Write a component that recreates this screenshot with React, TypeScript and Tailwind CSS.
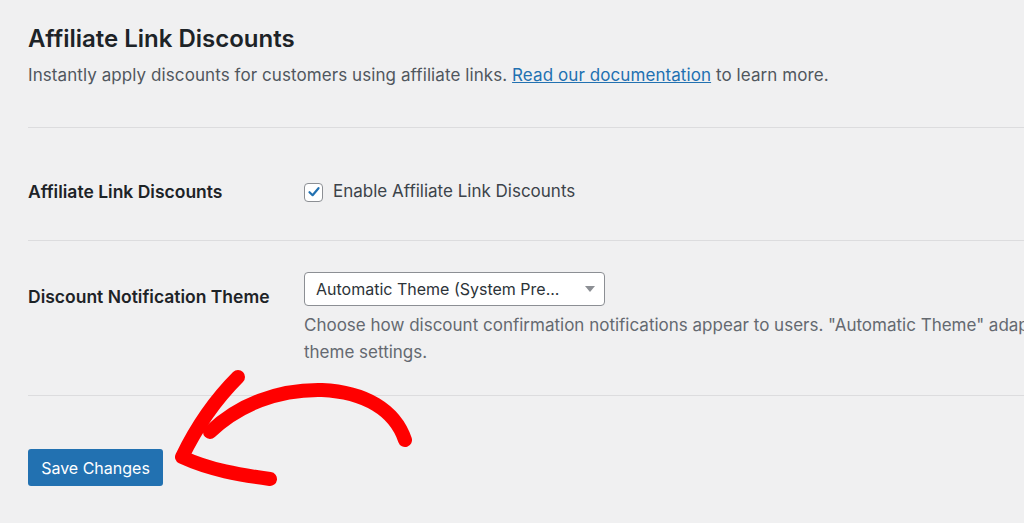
export default function App() {
  return (
    <div
      className="relative w-[1024px] h-[523px] overflow-hidden bg-[#f0f0f1] text-[#3c434a]"
      style={{ fontFamily: 'Inter, "Noto Sans", sans-serif' }}
    >
      <div className="w-[1300px] pl-[28px] pt-[24px]">
        <h2 className="text-[24px] font-semibold text-[#1d2327] leading-[30px]">Affiliate Link Discounts</h2>
        <p className="mt-[9px] text-[17px] leading-[24px] tracking-[0.08px] text-[#50575e]">
          Instantly apply discounts for customers using affiliate links.{" "}
          <a href="#" className="text-[#2271b1] underline">Read our documentation</a> to learn more.
        </p>

        <div className="mt-[40px] border-t border-[#dcdcde]" />

        {/* enable toggle */}
        <div className="flex items-center h-[112px] pt-[16px]">
          <div className="w-[276px] shrink-0 text-[17.5px] font-semibold text-[#1d2327]">Affiliate Link Discounts</div>
          <label className="flex items-center gap-[10px] text-[17px] text-[#3c434a]">
            <span className="w-[19px] h-[19px] rounded-[4px] border border-[#8c8f94] bg-white flex items-center justify-center">
              <svg width="14" height="14" viewBox="0 0 14 14">
                <path d="M2.5 7.2 L5.6 10.2 L11.5 3.2" fill="none" stroke="#2271b1" strokeWidth="2.2" strokeLinecap="round" strokeLinejoin="round" />
              </svg>
            </span>
            Enable Affiliate Link Discounts
          </label>
        </div>

        <div className="border-t border-[#dcdcde]" />

        {/* theme select */}
        <div className="flex pt-[31px] h-[154px]">
          <div className="w-[276px] shrink-0 pt-[12px] text-[17.5px] font-semibold text-[#1d2327]">Discount Notification Theme</div>
          <div className="min-w-0">
            <div className="w-[301px] h-[34px] rounded-[4px] border border-[#8c8f94] bg-white flex items-center justify-between pl-[11px] pr-[9px] text-[16px] text-[#2c3338]">
              <span>Automatic Theme (System Pre...</span>
              <svg width="10" height="6" viewBox="0 0 10 6"><path d="M0 0 H10 L5 6 Z" fill="#8c8f94" /></svg>
            </div>
            <p className="mt-[6px] text-[17px] leading-[27px] text-[#646970] w-[945px]">
              Choose how discount confirmation notifications appear to users. "Automatic Theme" adapts to the user's system
              theme settings.
            </p>
          </div>
        </div>

        <div className="border-t border-[#dcdcde]" />

        <button className="mt-[53px] w-[135px] h-[37px] rounded-[3px] bg-[#2271b1] text-white text-[16px]">
          Save Changes
        </button>
      </div>

      {/* hand-drawn red arrow */}
      <svg className="absolute left-0 top-0 pointer-events-none" width="1024" height="523" viewBox="0 0 1024 523">
        <path
          d="M405 440 C 395 410, 365 392, 322 390 C 278 389, 238 405, 210 432"
          fill="none"
          stroke="#ff0000"
          strokeWidth="14"
          strokeLinecap="round"
        />
        <path
          d="M238 377 C 215 400, 195 430, 182 457 C 210 470, 240 475, 270 479"
          fill="none"
          stroke="#ff0000"
          strokeWidth="14"
          strokeLinecap="round"
          strokeLinejoin="round"
        />
      </svg>
    </div>
  );
}
